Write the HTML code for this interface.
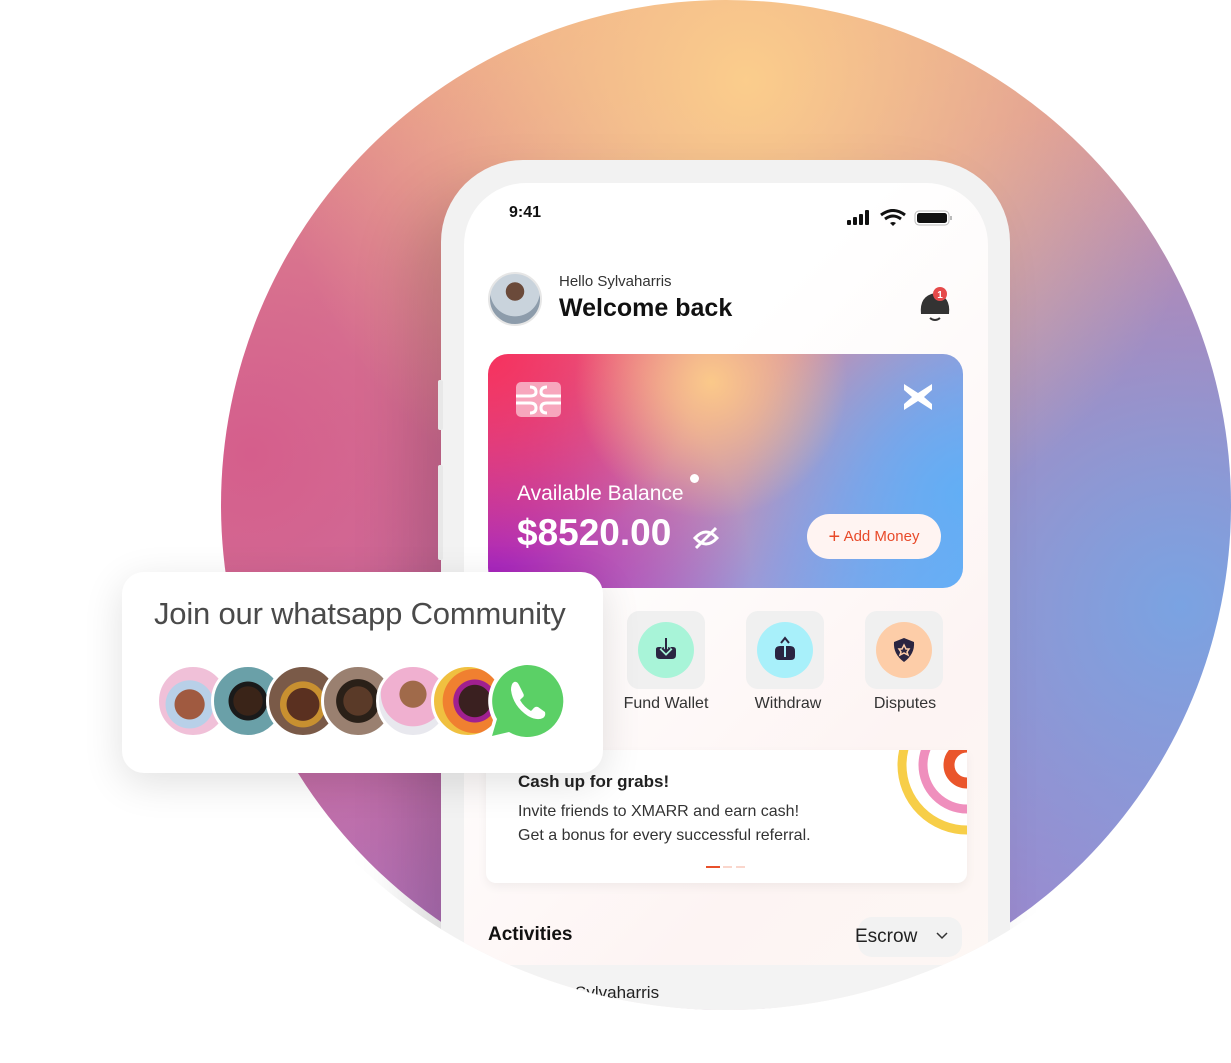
<!DOCTYPE html>
<html><head><meta charset="utf-8">
<style>
*{margin:0;padding:0;box-sizing:border-box}
body{width:1231px;height:1010px;overflow:hidden;background:#fff;font-family:"Liberation Sans",sans-serif;position:relative}
.circle{position:absolute;left:221px;top:0;width:1010px;height:1010px;border-radius:50%;
background:
radial-gradient(circle at 52% 8%,#fbcd8c 0%,rgba(251,205,140,0) 45%),
radial-gradient(circle at 95% 60%,#7aa3e2 0%,rgba(122,163,226,0) 45%),
radial-gradient(circle at 3% 45%,#d55e8c 0%,rgba(213,94,140,0) 45%),
radial-gradient(circle at 35% 95%,#b26cb8 0%,rgba(178,108,184,0) 50%),
linear-gradient(160deg,#f0a680,#c47aa8 50%,#9a8ad6)}
.clip{position:absolute;left:0;top:0;width:1231px;height:1010px;clip-path:ellipse(525px 505px at 726px 505px)}
.phone{position:absolute;left:441px;top:160px;width:569px;height:900px;border-radius:82px;background:#f2f2f2;box-shadow:-30px 30px 60px rgba(0,0,0,.15)}
.btn{position:absolute;left:438px;width:5px;background:#e8e8e8;border-radius:2px}
.screen{position:absolute;left:464px;top:183px;width:524px;height:880px;border-radius:62px;
background:linear-gradient(135deg,#ffffff 30%,#fdf4f3 70%,#fdf8f4)}
.abs{position:absolute}
.card{left:488px;top:354px;width:475px;height:234px;border-radius:20px;overflow:hidden;
background:
radial-gradient(circle at 47% 12%,#fbc98a 0%,rgba(251,201,138,0) 42%),
radial-gradient(circle at 100% 60%,#62aef5 0%,rgba(98,174,245,0) 45%),
radial-gradient(circle at 0% 0%,#f6325e 0%,rgba(246,50,94,0) 40%),
radial-gradient(circle at 0% 100%,#a520c0 0%,rgba(165,32,192,0) 50%),
linear-gradient(135deg,#e85a80,#d78aa0 40%,#9a9ad8 70%,#6ab0f8)}
.tile{position:absolute;top:611px;width:78px;height:78px;border-radius:12px;background:#f0f0f0}
.tile .c{position:absolute;left:11px;top:11px;width:56px;height:56px;border-radius:50%}
.lbl{position:absolute;top:695px;font-size:16px;color:#333;width:120px;text-align:center}
.wa{position:absolute;left:122px;top:572px;width:481px;height:201px;background:#fff;border-radius:22px;box-shadow:0 10px 40px rgba(0,0,0,.12)}
.av{position:absolute;top:662px;width:78px;height:78px;border-radius:50%;border:3px solid #fff}
</style></head><body>
<div class="circle"></div>
<div class="clip">
 <div class="phone"></div>
 <div class="btn" style="top:380px;height:50px"></div>
 <div class="btn" style="top:465px;height:95px"></div>
 <div class="screen"></div>
 <div class="abs" style="left:509px;top:204px;font-size:16px;font-weight:bold;color:#111">9:41</div>
 <svg class="abs" style="left:846px;top:209px" width="108" height="20" viewBox="0 0 108 20">
  <rect x="1" y="11" width="4" height="5" rx="1" fill="#111"/><rect x="7" y="8" width="4" height="8" rx="1" fill="#111"/><rect x="13" y="5" width="4" height="11" rx="1" fill="#111"/><rect x="19" y="1" width="4" height="15" rx="1" fill="#111"/>
  <path d="M35 6 Q47 -3 59 6" stroke="#111" stroke-width="3" fill="none"/><path d="M39 10 Q47 4 55 10" stroke="#111" stroke-width="3" fill="none"/><path d="M44 14 L47 17 L50 14 Q47 12 44 14Z" fill="#111"/>
  <rect x="69" y="2" width="34" height="14" rx="4" fill="#fff" stroke="#bbb"/><rect x="71" y="4" width="30" height="10" rx="2.5" fill="#111"/><rect x="104" y="7" width="2" height="4" fill="#bbb"/>
 </svg>
 <div class="abs" style="left:488px;top:272px;width:54px;height:54px;border-radius:50%;background:radial-gradient(circle at 50% 35%,#6b4a3a 0 22%,#c9d3dc 23% 60%,#8d9cab 61%);border:2px solid #e6e6e6"></div>
 <div class="abs" style="left:559px;top:273px;font-size:15px;color:#333">Hello Sylvaharris</div>
 <div class="abs" style="left:559px;top:294px;font-size:25px;font-weight:bold;color:#111">Welcome back</div>
 <svg class="abs" style="left:916px;top:284px" width="38" height="40" viewBox="0 0 38 40">
  <path d="M5 30 Q3 12 19 9 Q35 12 33 30Z" fill="#333"/><path d="M14 34 Q19 38 24 34" stroke="#333" stroke-width="2" fill="none"/>
  <circle cx="24" cy="10" r="7" fill="#e54a4a"/><text x="24" y="14" font-size="10" fill="#fff" text-anchor="middle" font-family="Liberation Sans" font-weight="bold">1</text>
 </svg>
 <div class="abs card">
  <div class="abs" style="left:28px;top:28px;width:45px;height:35px;border-radius:5px;background:#f7a6bd">
   <svg width="45" height="35" viewBox="0 0 45 35"><path d="M0 14 H14 M14 5 Q20 5 20 10 Q20 14 14 14 M14 21 Q20 21 20 26 Q20 31 14 31 M0 21 H14 M45 14 H31 M31 5 Q25 5 25 10 Q25 14 31 14 M31 21 Q25 21 25 26 Q25 31 31 31 M45 21 H31" stroke="#fff" stroke-width="3" fill="none"/></svg>
  </div>
  <svg class="abs" style="left:414px;top:28px" width="32" height="30" viewBox="0 0 32 30"><path d="M2 2 L16 11 L30 2 L30 8 L22 15 L30 22 L30 28 L16 19 L2 28 L2 22 L10 15 L2 8Z" fill="#fff"/></svg>
  <div class="abs" style="left:29px;top:128px;font-size:21px;color:#fff">Available Balance</div>
  <div class="abs" style="left:202px;top:120px;width:9px;height:9px;border-radius:50%;background:#fff"></div>
  <div class="abs" style="left:29px;top:158px;font-size:37px;font-weight:bold;color:#fff">$8520.00</div>
  <svg class="abs" style="left:204px;top:170px" width="28" height="26" viewBox="0 0 28 26"><path d="M3 14 Q14 2 25 14 Q14 26 3 14Z" stroke="#fff" stroke-width="3" fill="none"/><path d="M4 24 L24 4" stroke="#fff" stroke-width="3"/></svg>
  <div class="abs" style="left:319px;top:160px;width:134px;height:45px;border-radius:23px;background:#fff4f2;color:#e84a2a;font-size:15px;line-height:45px;text-align:center"><span style="font-size:20px;vertical-align:-2px">+</span> Add Money</div>
 </div>
 <div class="tile" style="left:627px"><div class="c" style="background:#a8f4d8"></div>
  <svg class="abs" style="left:25px;top:24px" width="28" height="28" viewBox="0 0 28 28"><path d="M4 14 Q4 12 7 12 H21 Q24 12 24 15 V20 Q24 24 20 24 H8 Q4 24 4 20Z" fill="#2a2541"/><path d="M14 3 V18 M9 13 L14 18 L19 13" stroke="#a8f4d8" stroke-width="4" fill="none"/><path d="M14 3 V17 M10 13 L14 17 L18 13" stroke="#2a2541" stroke-width="2" fill="none"/></svg></div>
 <div class="tile" style="left:746px"><div class="c" style="background:#a8f0fa"></div>
  <svg class="abs" style="left:25px;top:24px" width="28" height="28" viewBox="0 0 28 28"><path d="M4 16 Q4 11 9 11 H19 Q24 11 24 16 V21 Q24 25 20 25 H8 Q4 25 4 21Z" fill="#2a2541"/><path d="M14 4 V22" stroke="#a8f0fa" stroke-width="2"/><path d="M10 8 L14 3 L18 8" stroke="#2a2541" stroke-width="2" fill="none"/></svg></div>
 <div class="tile" style="left:865px"><div class="c" style="background:#fdcda8"></div>
  <svg class="abs" style="left:27px;top:25px" width="24" height="28" viewBox="0 0 24 28"><path d="M12 2 L22 6 Q23 18 12 26 Q1 18 2 6Z" fill="#2a2541"/><path d="M12 9 L14 13 L17 13 L15 16 L16 19 L12 17 L8 19 L9 16 L7 13 L10 13Z" stroke="#fdcda8" stroke-width="1.5" fill="none"/></svg></div>
 <div class="lbl" style="left:606px">Fund Wallet</div>
 <div class="lbl" style="left:728px">Withdraw</div>
 <div class="lbl" style="left:845px">Disputes</div>
 <div class="abs" style="left:486px;top:750px;width:481px;height:133px;background:#fff;border-radius:0 0 10px 10px;box-shadow:0 4px 10px rgba(0,0,0,.05);overflow:hidden">
  <svg class="abs" style="left:0;top:0" width="481" height="133"><g fill="none"><circle cx="481" cy="15" r="65" stroke="#f7ce48" stroke-width="9"/><circle cx="481" cy="15" r="44" stroke="#ef8fbd" stroke-width="9"/><circle cx="481" cy="15" r="18" stroke="#ea552b" stroke-width="11"/></g></svg>
  <div class="abs" style="left:32px;top:22px;font-size:17px;font-weight:bold;color:#222">Cash up for grabs!</div>
  <div class="abs" style="left:32px;top:50px;font-size:16px;color:#333;line-height:24px">Invite friends to XMARR and earn cash!<br>Get a bonus for every successful referral.</div>
  <div class="abs" style="left:220px;top:116px;width:14px;height:2px;background:#e8502b"></div>
  <div class="abs" style="left:237px;top:116px;width:9px;height:2px;background:#fad6cc"></div>
  <div class="abs" style="left:250px;top:116px;width:9px;height:2px;background:#fad6cc"></div>
 </div>
 <div class="abs" style="left:488px;top:924px;font-size:19px;font-weight:bold;color:#111">Activities</div>
 <div class="abs" style="left:858px;top:917px;width:104px;height:40px;border-radius:14px;background:#f2f2f2"></div>
 <div class="abs" style="left:855px;top:926px;font-size:19px;color:#222">Escrow</div>
 <svg class="abs" style="left:935px;top:931px" width="14" height="10"><path d="M2 2 L7 7 L12 2" stroke="#333" stroke-width="1.5" fill="none"/></svg>
 <div class="abs" style="left:464px;top:965px;width:524px;height:60px;background:#f3f3f3"></div>
 <div class="abs" style="left:575px;top:983px;font-size:17px;color:#222">Sylvaharris</div>
</div>
<div class="wa">
 <div class="abs" style="left:32px;top:24px;font-size:31px;color:#4a4a4a;letter-spacing:-0.2px">Join our whatsapp Community</div>
</div>
<div class="av" style="left:156px;width:74px;height:74px;top:664px;background:radial-gradient(circle at 45% 55%,#a05a40 0 28%,#b8d0e8 29% 45%,#f0c0d8 46%)"></div>
<div class="av" style="left:211px;width:74px;height:74px;top:664px;background:radial-gradient(circle at 50% 50%,#3a2418 0 30%,#1a1a1a 31% 40%,#6aa0a8 41%)"></div>
<div class="av" style="left:266px;width:74px;height:74px;top:664px;background:radial-gradient(circle at 50% 55%,#5a3020 0 32%,#c89030 33% 45%,#7a5a48 46%)"></div>
<div class="av" style="left:321px;width:74px;height:74px;top:664px;background:radial-gradient(circle at 50% 50%,#5a3a28 0 30%,#2a2018 31% 45%,#9a8070 46%)"></div>
<div class="av" style="left:376px;width:74px;height:74px;top:664px;background:radial-gradient(circle at 50% 40%,#a06a4a 0 25%,#f0b0d0 26% 60%,#e8e8ee 61%)"></div>
<div class="av" style="left:431px;width:74px;height:74px;top:664px;background:radial-gradient(circle at 60% 50%,#3a2020 0 30%,#a02090 31% 40%,#f08030 41% 60%,#f0c040 61%)"></div>
<svg class="abs" style="left:484px;top:658px" width="86" height="86" viewBox="0 0 86 86">
 <path d="M43 3 A40 40 0 1 1 24 78 L3 83 L9 62 A40 40 0 0 1 43 3Z" fill="#fff"/>
 <path d="M43 7 A36 36 0 1 1 25 74 L8 78 L13 61 A36 36 0 0 1 43 7Z" fill="#5bd066"/>
 <path d="M30 24 Q27 26 27 32 Q29 48 44 58 Q53 63 59 60 Q62 58 61 54 L54 49 Q51 48 49 51 L47 53 Q40 49 36 42 L38 40 Q41 38 39 35 L35 27 Q33 23 30 24Z" fill="#fff"/>
</svg>
</body></html>
